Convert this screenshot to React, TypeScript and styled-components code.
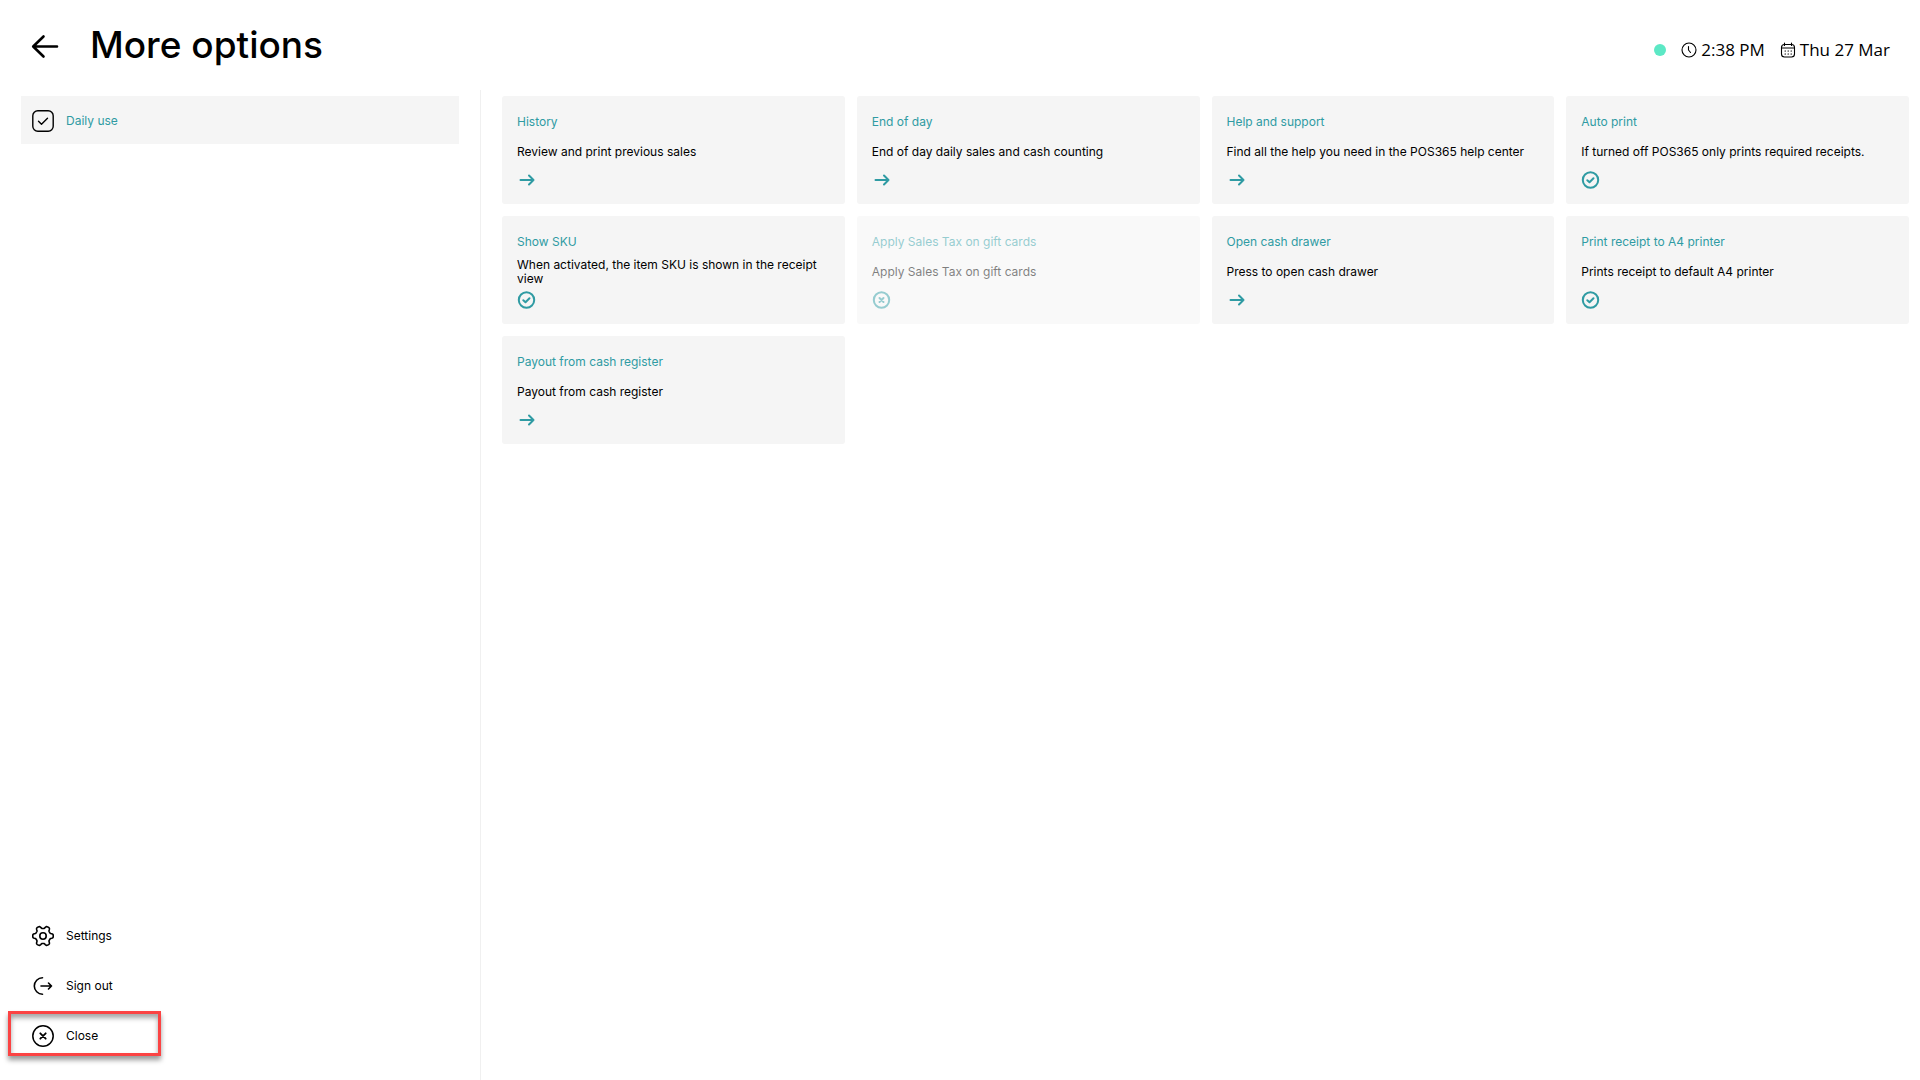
import React from "react";
import styled, { createGlobalStyle } from "styled-components";

const TEAL = "#2f9ba3";

const GlobalStyle = createGlobalStyle`
  *, *::before, *::after { box-sizing: border-box; }
  body { margin: 0; background: #fff; color: #000; font-family: Inter, "Liberation Sans", sans-serif; font-size: 12px; }
  button { font: inherit; color: inherit; border: 0; margin: 0; padding: 0; background: none; text-align: left; cursor: pointer; }
`;

const Page = styled.div`
  min-height: 100vh;
  display: flex;
  flex-direction: column;
`;

const Header = styled.header`
  display: flex;
  align-items: center;
  justify-content: space-between;
  height: 90px;
  padding: 2px 30px 0;
`;

const Heading = styled.div`
  display: flex;
  align-items: center;
  gap: 30px;
`;

const BackButton = styled.button`
  display: flex;
  width: 30px;
  height: 30px;
`;

const Title = styled.h1`
  margin: 0;
  padding-bottom: 2px;
  font-size: 37px;
  line-height: 44px;
  font-weight: 500;
`;

const Status = styled.div`
  display: flex;
  align-items: center;
  gap: 15px;
  padding-top: 7px;
  font-family: "Open Sans", "Noto Sans", sans-serif;
  font-size: 17px;
  line-height: 24px;
`;

const Dot = styled.span`
  width: 12px;
  height: 12px;
  border-radius: 50%;
  background: #5ce8c5;
`;

const StatusItem = styled.span`
  display: flex;
  align-items: center;
  gap: 4px;
`;

const Body = styled.div`
  flex: 1;
  display: flex;
`;

const Sidebar = styled.nav`
  flex: 0 0 25%;
  display: flex;
  flex-direction: column;
  justify-content: space-between;
  padding: 6px 21px 21px;
`;

const MenuGroup = styled.div`
  display: flex;
  flex-direction: column;
  gap: 2px;
`;

const MenuItem = styled.button<{ $active?: boolean }>`
  display: flex;
  align-items: center;
  gap: 12px;
  width: 100%;
  height: 48px;
  padding: 2px 11px 0;
  line-height: 16px;
  background: ${(p) => (p.$active ? "#f5f5f5" : "transparent")};
  color: ${(p) => (p.$active ? TEAL : "#000")};

  svg { color: #000; flex: none; }
`;

const HighlightAnchor = styled.div`
  position: relative;
`;

const Highlight = styled.span`
  position: absolute;
  left: -13px;
  top: 0;
  width: 153px;
  height: 45px;
  border: 3px solid #fb4343;
  box-shadow: 0 4px 5px rgba(0, 0, 0, 0.4), inset 0 4px 5px rgba(0, 0, 0, 0.35);
  pointer-events: none;
`;

const Content = styled.main`
  flex: 1;
  border-left: 1px solid #f0f0f0;
  padding: 6px 11px 24px 21px;
`;

const CardGrid = styled.div`
  display: grid;
  grid-template-columns: repeat(4, minmax(0, 1fr));
  gap: 12px;
`;

const Card = styled.button`
  display: flex;
  flex-direction: column;
  height: 108px;
  padding: 16px 15px 12px;
  border-radius: 3px;
  background: #f5f5f5;

  &:disabled { opacity: 0.5; cursor: default; color: #000; }
`;

const CardTitle = styled.span`
  line-height: 20px;
  color: ${TEAL};
`;

const CardText = styled.span`
  display: flex;
  align-items: center;
  height: 28px;
  margin: 6px 0 4px;
  line-height: 14px;
`;

const CardIcon = styled.span`
  display: flex;
  color: ${TEAL};
`;

const stroke = {
  fill: "none",
  stroke: "currentColor",
  strokeLinecap: "round",
  strokeLinejoin: "round",
} as const;

const BackIcon = () => (
  <svg width="30" height="30" viewBox="0 0 30 30" {...stroke} strokeWidth="2.6" aria-hidden="true">
    <path d="M27 15.500H3.500M13.500 5.500L3.200 15.500l10.300 10" />
  </svg>
);

const DailyIcon = () => (
  <svg width="22" height="22" viewBox="0 0 22 22" {...stroke} strokeWidth="1.4" aria-hidden="true">
    <rect x=".8" y=".8" width="20.400" height="20.400" rx="5" />
    <path d="M6.500 11.200l3 3 6-6" />
  </svg>
);

// Six rounded teeth, one pointing to each side and two each at the top and bottom.
const gearPath =
  Array.from({ length: 120 }, (_, i) => {
    const a = (i / 120) * Math.PI * 2;
    const r = 8.9 + 1.4 * Math.tanh(2 * Math.cos(6 * a));
    return `${i ? "L" : "M"}${(11 + r * Math.cos(a)).toFixed(2)} ${(11 + r * Math.sin(a)).toFixed(2)}`;
  }).join("") + "Z";

const GearIcon = () => (
  <svg width="22" height="22" viewBox="0 0 22 22" {...stroke} strokeWidth="1.6" aria-hidden="true">
    <path d={gearPath} />
    <circle cx="11" cy="11" r="3.200" />
  </svg>
);

const SignOutIcon = () => (
  <svg width="22" height="22" viewBox="0 0 22 22" {...stroke} strokeWidth="1.600" aria-hidden="true">
    <path d="M10.500 2.800a8.200 8.200 0 0 0 0 16.400M9 11h10.500M16.500 8l3 3-3 3" />
  </svg>
);

const CloseIcon = () => (
  <svg width="22" height="22" viewBox="0 0 22 22" {...stroke} strokeWidth="1.500" aria-hidden="true">
    <circle cx="11" cy="11" r="10.200" />
    <path d="M8.300 8.300l5.400 5.400M13.700 8.300l-5.400 5.400" strokeWidth="1.800" />
  </svg>
);

const ClockIcon = () => (
  <svg width="16" height="16" viewBox="0 0 16 16" {...stroke} strokeWidth="1.100" aria-hidden="true">
    <circle cx="8" cy="8" r="7" />
    <path d="M7.500 4.500V8l2 2.500" />
  </svg>
);

const CalendarIcon = () => (
  <svg width="16" height="16" viewBox="0 0 16 16" {...stroke} strokeWidth="1.100" aria-hidden="true">
    <rect x="1.500" y="2.500" width="13" height="12.500" rx="3" />
    <path d="M1.500 6h13M4.500 1v2.500M11.500 1v2.500" />
    <path d="M5 9h.5M8 9h.5M11 9h.5M5 12h.5M8 12h.5M11 12h.5" />
  </svg>
);

const ArrowIcon = () => (
  <svg width="20" height="20" viewBox="0 0 20 20" {...stroke} strokeWidth="2" aria-hidden="true">
    <path d="M3.500 10h13M12 5.500l4.500 4.500-4.500 4.500" />
  </svg>
);

const CheckIcon = () => (
  <svg width="20" height="20" viewBox="0 0 20 20" {...stroke} strokeWidth="2" aria-hidden="true">
    <circle cx="9.500" cy="10" r="7.700" />
    <path d="M6.300 10.200l2.200 2 4-4" />
  </svg>
);

const CrossIcon = () => (
  <svg width="20" height="20" viewBox="0 0 20 20" {...stroke} strokeWidth="2" aria-hidden="true">
    <circle cx="9.500" cy="10" r="7.700" />
    <path d="M7.500 8l4 4M11.500 8l-4 4" />
  </svg>
);

const icons = { arrow: ArrowIcon, check: CheckIcon, cross: CrossIcon };

type Option = { title: string; text: string; icon: keyof typeof icons; disabled?: boolean };

const options: Option[] = [
  { title: "History", text: "Review and print previous sales", icon: "arrow" },
  { title: "End of day", text: "End of day daily sales and cash counting", icon: "arrow" },
  { title: "Help and support", text: "Find all the help you need in the POS365 help center", icon: "arrow" },
  { title: "Auto print", text: "If turned off POS365 only prints required receipts.", icon: "check" },
  { title: "Show SKU", text: "When activated, the item SKU is shown in the receipt view", icon: "check" },
  { title: "Apply Sales Tax on gift cards", text: "Apply Sales Tax on gift cards", icon: "cross", disabled: true },
  { title: "Open cash drawer", text: "Press to open cash drawer", icon: "arrow" },
  { title: "Print receipt to A4 printer", text: "Prints receipt to default A4 printer", icon: "check" },
  { title: "Payout from cash register", text: "Payout from cash register", icon: "arrow" },
];

export default function App() {
  return (
    <Page>
      <GlobalStyle />
      <Header>
        <Heading>
          <BackButton type="button" aria-label="Back"><BackIcon /></BackButton>
          <Title>More options</Title>
        </Heading>
        <Status>
          <Dot />
          <StatusItem><ClockIcon />2:38 PM</StatusItem>
          <StatusItem><CalendarIcon />Thu 27 Mar</StatusItem>
        </Status>
      </Header>
      <Body>
        <Sidebar>
          <MenuGroup>
            <MenuItem type="button" $active><DailyIcon />Daily use</MenuItem>
          </MenuGroup>
          <MenuGroup>
            <MenuItem type="button"><GearIcon />Settings</MenuItem>
            <MenuItem type="button"><SignOutIcon />Sign out</MenuItem>
            <HighlightAnchor>
              <MenuItem type="button"><CloseIcon />Close</MenuItem>
              <Highlight />
            </HighlightAnchor>
          </MenuGroup>
        </Sidebar>
        <Content>
          <CardGrid>
            {options.map((o) => {
              const Icon = icons[o.icon];
              return (
                <Card key={o.title} type="button" disabled={o.disabled}>
                  <CardTitle>{o.title}</CardTitle>
                  <CardText>{o.text}</CardText>
                  <CardIcon><Icon /></CardIcon>
                </Card>
              );
            })}
          </CardGrid>
        </Content>
      </Body>
    </Page>
  );
}
